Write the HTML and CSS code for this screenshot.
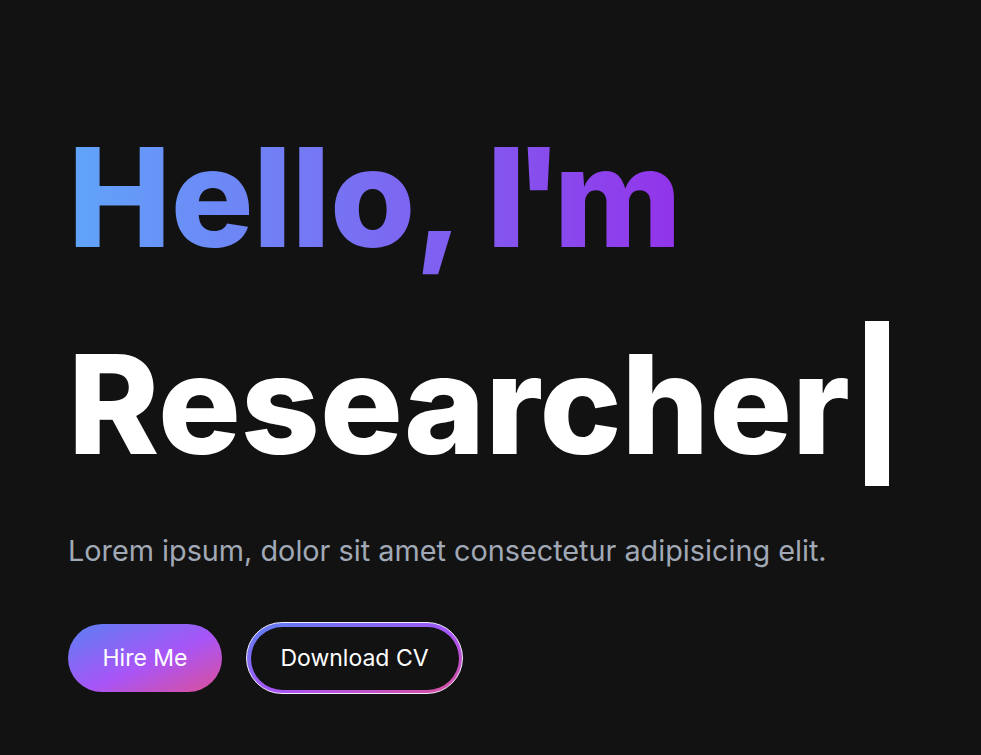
FILE: index.html
```html
<!DOCTYPE html>
<html lang="en">
<head>
<meta charset="utf-8">
<title>Hero</title>
<link rel="stylesheet" href="styles.css">
</head>
<body>
<main class="hero">
  <h1 class="title">
    <span class="greeting">Hello, <span class="tight-i">I</span><span class="apos">'</span>m</span>
    <span class="role">Researcher<span class="cursor"></span></span>
  </h1>
  <p class="lead">Lorem ipsum, dolor sit amet consectetur adipisicing elit.</p>
  <div class="actions">
    <a class="btn btn-primary" href="#">Hire Me</a>
    <a class="btn-outline" href="#"><span class="btn-outline-inner">Download CV</span></a>
  </div>
</main>
</body>
</html>
```

FILE: styles.css
```css
* { box-sizing: border-box; }
html, body { margin: 0; padding: 0; }
body {
  background: #121212;
  font-family: Inter, "Noto Sans", sans-serif;
  color: #fff;
  height: 755px;
  overflow: hidden;
}
.hero {
  padding: 93px 68px 0;
}
.title {
  margin: 0;
  font-size: 138px;
  line-height: 1.5;
  font-weight: 800;
}
.greeting {
  display: inline-block;
  letter-spacing: -0.6px;
  background: linear-gradient(to right, #60a5fa, #9333ea);
  -webkit-background-clip: text;
  background-clip: text;
  color: transparent;
}
.tight-i {
  letter-spacing: -11.6px;
}
.apos {
  letter-spacing: -9.6px;
}
.role {
  display: block;
  color: #fff;
}
.cursor {
  display: inline-block;
  width: 24px;
  height: 165px;
  background: #fff;
  margin-left: 15px;
  vertical-align: -32px;
}
.lead {
  margin: 23px 0 0;
  font-size: 28.8px;
  line-height: 42px;
  color: #a1a9b6;
}
.actions {
  display: flex;
  align-items: center;
  gap: 24px;
  margin-top: 50px;
}
.btn {
  display: inline-flex;
  align-items: center;
  justify-content: center;
  text-decoration: none;
  color: #fff;
  font-size: 23px;
  border-radius: 999px;
}
.btn-primary {
  width: 154px;
  height: 68px;
  background: linear-gradient(to bottom right, #5b80f3, #a855f7 55%, #dc4f99);
}
.btn-outline {
  display: inline-flex;
  width: 217px;
  height: 72px;
  padding: 3.5px;
  border: 1.5px solid #f2eaff;
  border-radius: 999px;
  background: linear-gradient(to bottom right, #5b80f3, #a855f7 55%, #dc4f99);
  text-decoration: none;
}
.btn-outline-inner {
  flex: 1;
  display: flex;
  align-items: center;
  justify-content: center;
  border-radius: 999px;
  background: #121212;
  color: #fff;
  font-size: 23px;
}
```
